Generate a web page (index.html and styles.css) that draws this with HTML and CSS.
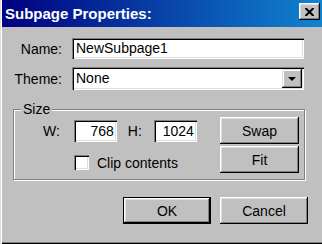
FILE: index.html
```html
<!DOCTYPE html>
<html>
<head>
<meta charset="utf-8">
<link rel="stylesheet" href="styles.css">
</head>
<body>
<div class="window">
  <div class="titlebar">
    <span class="title">Subpage Properties:</span>
    <div class="close">
      <svg width="9" height="8" viewBox="0 0 9 8"><path d="M0.5 0 L8.5 8 M8.5 0 L0.5 8" stroke="#000" stroke-width="2" fill="none"/></svg>
    </div>
  </div>
  <div class="body">
    <div class="row row-name">
      <span class="lbl">Name:</span>
      <div class="field name-field">NewSubpage1</div>
    </div>
    <div class="row row-theme">
      <span class="lbl">Theme:</span>
      <div class="field select">
        <span class="sel-text">None</span>
        <span class="drop"><svg width="8" height="4" viewBox="0 0 8 4"><polygon points="0,0 8,0 4,4" fill="#000"/></svg></span>
      </div>
    </div>
    <fieldset class="group">
      <legend class="legend">Size</legend>
      <div class="group-inner">
        <div class="group-left">
          <div class="dims">
            <span class="dl">W:</span>
            <div class="field num num-w">768</div>
            <span class="dl dl-h">H:</span>
            <div class="field num num-h">1024</div>
          </div>
          <div class="check-row">
            <span class="checkbox"></span>
            <span class="check-label">Clip contents</span>
          </div>
        </div>
        <div class="group-right">
          <div class="btn side-btn">Swap</div>
          <div class="btn side-btn">Fit</div>
        </div>
      </div>
    </fieldset>
    <div class="actions">
      <div class="btn action-btn default">OK</div>
      <div class="btn action-btn">Cancel</div>
    </div>
  </div>
</div>
</body>
</html>
```
FILE: styles.css
```css
html, body {
  margin: 0;
  padding: 0;
}
body {
  background: #c0c0c0;
  font-family: "Liberation Sans", Arial, sans-serif;
  font-size: 14px;
  color: #000;
}
.window {
  width: 322px;
  height: 244px;
  box-sizing: border-box;
  padding-left: 2px;
  box-shadow: inset 1px 0 #dfdfdf, inset 2px 0 #ffffff, inset 0 -1px #000000, inset 0 -2px #808080;
  display: flex;
  flex-direction: column;
}
.titlebar {
  height: 27px;
  flex: none;
  display: flex;
  align-items: flex-start;
  padding-left: 3px;
  background: linear-gradient(90deg, #000080, #1084d0);
}
.title {
  color: #fff;
  font-weight: bold;
  font-size: 15px;
  line-height: 27px;
}
.close {
  margin: 3px 2px 0 auto;
  width: 21px;
  height: 17px;
  box-sizing: border-box;
  background: #c0c0c0;
  box-shadow: inset -1px -1px #000, inset 1px 1px #fff, inset -2px -2px #808080, inset 2px 2px #dfdfdf;
  display: flex;
  align-items: center;
  justify-content: center;
}
.close svg {
  display: block;
  margin-left: -1px;
}
.body {
  padding: 0 14px 0 11px;
}
.row {
  display: flex;
  align-items: center;
}
.row-name {
  margin-top: 11px;
  height: 21px;
}
.row-theme {
  margin-top: 8px;
  height: 23px;
}
.lbl {
  width: 49px;
  text-align: right;
  margin-right: 10px;
}
.field {
  box-sizing: border-box;
  background: #fff;
  box-shadow: inset 1px 1px #808080, inset 2px 2px #000, inset -1px -1px #fff, inset -2px -2px #dfdfdf;
}
.name-field {
  width: 232px;
  height: 21px;
  line-height: 21px;
  padding-left: 4px;
}
.select {
  width: 232px;
  height: 23px;
  padding: 2px;
  display: flex;
  align-items: stretch;
}
.sel-text {
  flex: 1;
  padding-left: 2px;
  line-height: 19px;
}
.drop {
  width: 20px;
  box-sizing: border-box;
  background: #c0c0c0;
  box-shadow: inset -1px -1px #000, inset 1px 1px #dfdfdf, inset -2px -2px #808080, inset 2px 2px #fff;
  display: flex;
  align-items: center;
  justify-content: center;
}
.drop svg {
  display: block;
}
.group {
  margin: 11px 0 0 0;
  width: 292px;
  box-sizing: border-box;
  min-width: 0;
  border: 1px solid #808080;
  padding: 0 5px 6px 0;
  box-shadow: inset 1px 1px #fff, 1px 1px #fff;
}
.legend {
  margin-left: 7px;
  padding: 0 2px;
  line-height: 16px;
  background: #c0c0c0;
}
.group-inner {
  display: flex;
  justify-content: space-between;
}
.group-left {
  padding-top: 3px;
  padding-left: 29px;
}
.dims {
  display: flex;
  align-items: center;
  height: 22px;
}
.num {
  width: 43px;
  height: 22px;
  line-height: 22px;
  text-align: right;
  padding-right: 3px;
}
.num-w {
  margin-left: 14px;
}
.dl-h {
  margin-left: 11px;
}
.num-h {
  margin-left: 12px;
}
.check-row {
  margin-top: 13px;
  padding-left: 31px;
  display: flex;
  align-items: center;
  height: 15px;
}
.checkbox {
  width: 15px;
  height: 15px;
  box-sizing: border-box;
  background: #fff;
  box-shadow: inset 1px 1px #808080, inset 2px 2px #000, inset -1px -1px #fff, inset -2px -2px #dfdfdf;
}
.check-label {
  margin-left: 8px;
}
.group-right {
  width: 79px;
  display: flex;
  flex-direction: column;
  gap: 2px;
}
.btn {
  box-sizing: border-box;
  height: 27px;
  display: flex;
  align-items: center;
  justify-content: center;
  background: #c0c0c0;
  box-shadow: inset -1px -1px #000, inset 1px 1px #fff, inset -2px -2px #808080, inset 2px 2px #dfdfdf;
}
.actions {
  margin-top: 17px;
  display: flex;
  justify-content: flex-end;
  gap: 9px;
}
.action-btn {
  width: 88px;
}
.default {
  border: 1px solid #000;
}
```
